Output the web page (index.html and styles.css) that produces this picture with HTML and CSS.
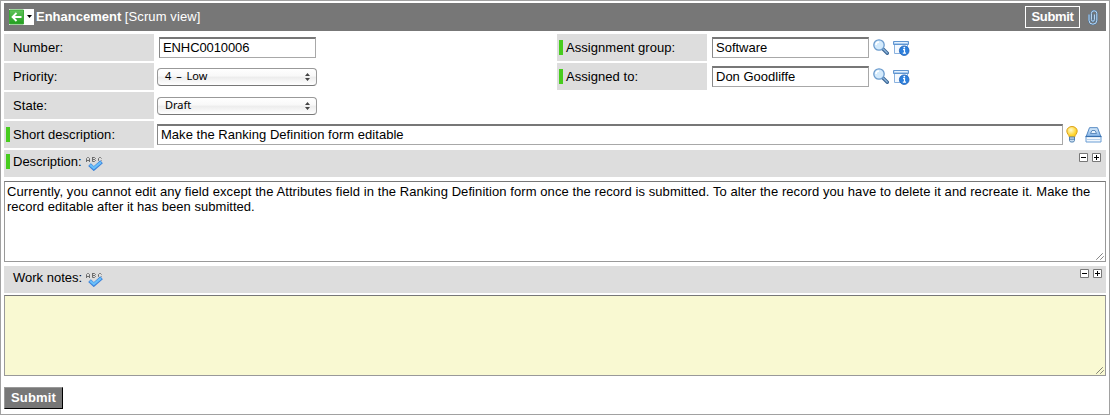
FILE: index.html
```html
<!DOCTYPE html>
<html lang="en">
<head>
<meta charset="utf-8">
<title>Enhancement</title>
<link rel="stylesheet" href="styles.css">
</head>
<body>
<svg class="defs" aria-hidden="true">
  <defs>
    <linearGradient id="green" x2="0" y2="1"><stop stop-color="#62c45c"/><stop offset="1" stop-color="#1f9d1d"/></linearGradient>
    <linearGradient id="blue" x2="0" y2="1"><stop stop-color="#dceefc"/><stop offset="1" stop-color="#7fb0e6"/></linearGradient>
    <radialGradient id="glow" cx=".4" cy=".35"><stop stop-color="#fffbd0"/><stop offset="1" stop-color="#ffd42c"/></radialGradient>
  </defs>
  <symbol id="search" viewBox="0 0 16 16">
    <path d="M10 10l4.3 4.3" stroke="#3b6695" stroke-width="3.4" stroke-linecap="round"/>
    <path d="M10.5 10.3l3.7 3.7" stroke="#8fb6dc" stroke-width="1.3" stroke-linecap="round"/>
    <circle cx="6" cy="6" r="5.2" fill="#d3eafc" stroke="#6b9bcd" stroke-width="1.3"/>
    <path d="M3 6a3 3 0 0 1 3-3" fill="none" stroke="#fff" stroke-width="1.5"/>
  </symbol>
  <symbol id="info" viewBox="0 0 17 16">
    <path d="M1.500 4.500h13v9h-13z" fill="#f4f9fe" stroke="#8bb2df"/>
    <path d="M.5 1.500h15v3H.5z" fill="#a7caef" stroke="#6095d0"/>
    <path d="M1.500 2.500h13" stroke="#e4f1fd"/>
    <circle cx="11.2" cy="10.7" r="4.8" fill="#2c7fdc" stroke="#1d5fb5" stroke-width=".8"/>
    <path d="M10 9.700h1.500v3.500M9.800 13.200h3.200" fill="none" stroke="#fff" stroke-width="1.2"/>
    <circle cx="11.3" cy="7.700" r=".9" fill="#fff"/>
  </symbol>
  <symbol id="spell" viewBox="0 0 17 15">
    <path d="M.5 6V2.500l1-1h1l1 1V6M.5 4.500h3M6.500 1v4.500h2l1-1-1-1h-2 2l1-1-1-1h-2M15.500 2.500l-1-1h-1l-1 1v2l1 1h1l1-1" fill="none" stroke="#6c6c6c"/>
    <path d="M3.500 8.600l4.300 4L15.600 5.800" fill="none" stroke="#3d83da" stroke-width="3.8"/>
    <path d="M4.100 8.800l3.700 3.200L15 6.200" fill="none" stroke="#6ac0fa" stroke-width="2.200"/>
  </symbol>
</svg>

<main class="form">
  <header class="bar">
    <span class="back">
      <svg width="25" height="16" viewBox="0 0 25 16">
        <path d="M0 0h25v16H0z" fill="#fff"/>
        <path d="M.5 1h14v14H.5z" fill="url(#green)" stroke="#3dab39"/>
        <path d="M12.500 8H4M7.500 4L3.500 8l4 4" fill="none" stroke="#fff" stroke-width="1.800"/>
        <path d="M18 6h5l-2.500 3z" fill="#000"/>
      </svg>
    </span>
    <h1 class="title">Enhancement <span class="view">[Scrum view]</span></h1>
    <button class="top-submit">Submit</button>
    <svg class="clip" width="10" height="15" viewBox="0 0 10 15">
      <path d="M1 4.500v5.800a3.800 3.800 0 0 0 7.800 0V3.500a2.700 2.700 0 0 0-5.400 0v6.200a1.500 1.500 0 0 0 3 0V4.500" fill="none" stroke="#41719f" stroke-width="1.900"/>
      <path d="M1 4.500v5.800a3.800 3.800 0 0 0 7.800 0V3.500a2.700 2.700 0 0 0-5.400 0v6.200a1.500 1.500 0 0 0 3 0V4.500" fill="none" stroke="#c5dff7" stroke-width="1"/>
    </svg>
  </header>

  <section class="columns">
    <div class="column">
      <div class="row"><div class="label">Number:</div><div class="input number">ENHC0010006</div></div>
      <div class="row"><div class="label">Priority:</div><div class="select"><span>4 – Low</span><svg width="5" height="8" viewBox="0 0 5 8"><path d="M0 3l2.500-3L5 3zM0 5l2.500 3L5 5z" fill="#444"/></svg></div></div>
      <div class="row"><div class="label">State:</div><div class="select"><span>Draft</span><svg width="5" height="8" viewBox="0 0 5 8"><path d="M0 3l2.500-3L5 3zM0 5l2.500 3L5 5z" fill="#444"/></svg></div></div>
    </div>
    <div class="column">
      <div class="row"><div class="label mark">Assignment group:</div><div class="input">Software</div><svg class="search" width="16" height="16"><use href="#search"/></svg><svg class="info" width="17" height="16"><use href="#info"/></svg></div>
      <div class="row"><div class="label mark">Assigned to:</div><div class="input">Don Goodliffe</div><svg class="search" width="16" height="16"><use href="#search"/></svg><svg class="info" width="17" height="16"><use href="#info"/></svg></div>
    </div>
  </section>

  <div class="row short">
    <div class="label mark">Short description:</div>
    <div class="input wide">Make the Ranking Definition form editable</div>
    <svg class="bulb" width="12" height="17" viewBox="0 0 12 17">
      <path d="M3.300 11C3.300 9 .8 8 .8 5a5.200 4.500 0 0 1 10.400 0c0 3-2.500 4-2.500 6z" fill="url(#glow)" stroke="#dba21c"/>
      <path d="M3.500 11h5v3.500l-1 1.500h-3l-1-1.500z" fill="#c9ddf0" stroke="#4678aa" stroke-width=".9"/>
      <path d="M3.500 13.200h5" stroke="#4678aa" stroke-width=".9"/>
    </svg>
    <svg class="book" width="17" height="16" viewBox="0 0 17 16">
      <path d="M4.500.7h8l3.300 8.800H1.200z" fill="url(#blue)" stroke="#5287c2"/>
      <path d="M1 9.500h15v5.500H1z" fill="#f4f9fe" stroke="#6b9dd4"/>
      <path d="M.5 9.500h16" stroke="#376fae" stroke-width="1.200"/>
      <path d="M2 12.500h13" stroke="#b7d0ea"/>
      <path d="M5.500 6.500l1.500-3h3l1.500 3z" fill="#e9f4fe" stroke="#4678b1" stroke-width=".8"/>
    </svg>
  </div>

  <div class="section mark">
    <span>Description:</span><svg class="spell" width="17" height="15"><use href="#spell"/></svg>
    <span class="tools"><svg width="9" height="9" viewBox="0 0 9 9"><path d="M.5.5h8v8h-8z" fill="#fff" stroke="#777"/><path d="M2 4.500h5" stroke="#000"/></svg><svg width="9" height="9" viewBox="0 0 9 9"><path d="M.5.5h8v8h-8z" fill="#fff" stroke="#777"/><path d="M2 4.500h5M4.500 2v5" stroke="#000"/></svg></span>
  </div>
  <div class="area description"><p class="line first">Currently, you cannot edit any field except the Attributes field in the Ranking Definition form once the record is submitted. To alter the record you have to delete it and recreate it. Make the</p><p class="line">record editable after it has been submitted.</p>
    <svg class="grip" width="8" height="7" viewBox="0 0 8 7"><path d="M.5 6.500l6-6M4.500 6.500l3-3" stroke="#444" stroke-dasharray="1.200 .3"/></svg>
  </div>

  <div class="section notes">
    <span>Work notes:</span><svg class="spell" width="17" height="15"><use href="#spell"/></svg>
    <span class="tools"><svg width="9" height="9" viewBox="0 0 9 9"><path d="M.5.5h8v8h-8z" fill="#fff" stroke="#777"/><path d="M2 4.500h5" stroke="#000"/></svg><svg width="9" height="9" viewBox="0 0 9 9"><path d="M.5.5h8v8h-8z" fill="#fff" stroke="#777"/><path d="M2 4.500h5M4.500 2v5" stroke="#000"/></svg></span>
  </div>
  <div class="area yellow">
    <svg class="grip" width="8" height="7" viewBox="0 0 8 7"><path d="M.5 6.500l6-6M4.500 6.500l3-3" stroke="#444" stroke-dasharray="1.200 .3"/></svg>
  </div>
  <button class="bottom-submit">Submit</button>
</main>
</body>
</html>
```
FILE: styles.css
```css
* { box-sizing: border-box; }
body { margin: 0; background: #fff; color: #000; font: 13px/15px "Liberation Sans", Arial, sans-serif; }
svg { display: block; flex: none; }
.defs { position: absolute; width: 0; height: 0; }
.form { display: flex; flex-direction: column; width: 1110px; height: 415px; padding: 2px 3px 0; border: 1px solid #a1a1a1; }
.bar { display: flex; align-items: center; height: 28px; padding: 0 8px 0 5px; background: #777; color: #fff; }
.title { flex: 1; margin: -2px 0 0 2px; font-size: 13px; font-weight: bold; line-height: 15px; }
.view { font-weight: normal; letter-spacing: .1px; }
button { margin: 0; padding: 0 0 1px; background: #777; color: #fff; font: bold 13px/15px "Liberation Sans", Arial, sans-serif; }
.top-submit { width: 55px; height: 22px; margin-right: 8px; border: 1px solid #fff; letter-spacing: -.35px; }
.columns { display: grid; grid-template-columns: 553px 1fr; margin-top: 3px; }
.column { display: flex; flex-direction: column; gap: 2px; }
.row { display: flex; align-items: center; height: 27px; }
.label { display: flex; align-items: center; width: 150px; height: 27px; padding-left: 9px; background: #ddd; letter-spacing: .05px; }
.mark::before { content: ""; width: 4px; height: 15px; margin: 0 3px 0 -7px; background: #47cc1e; }
.input { width: 157px; height: 21px; margin-left: 5px; padding: 1px 3px; border: 1px solid #a8a8a8; border-top: 2px solid #777; border-left-color: #888; background: #fff; white-space: nowrap; }
.number { letter-spacing: -.1px; }
.select { display: flex; align-items: center; justify-content: space-between; width: 160px; height: 18px; margin-left: 3px; padding: 0 6px 2px 7px; border: 1px solid #999; border-bottom-color: #777; border-radius: 4px; background: linear-gradient(#fff, #f8f8f8 45%, #ececec 50%, #fff); font: 11px/13px "Noto Sans", sans-serif; word-spacing: 2px; }
.select svg { margin-top: 2px; }
.search { margin: -2px 0 0 4px; }
.info { margin-left: 4px; }
.short { margin-top: 2px; }
.wide { width: 906px; margin-left: 3px; letter-spacing: .03px; }
.bulb { margin-left: 3px; }
.book { margin-left: 7px; }
.section { display: flex; align-items: center; height: 27px; margin-top: 2px; padding: 0 5px 4px 9px; background: #ddd; }
.spell { margin: 3px 0 0 4px; }
.tools { display: flex; gap: 4px; margin: -9px 0 0 auto; }
.area { position: relative; height: 81px; border: 1px solid #999; border-top-color: #777; background: #fff; }
.description { margin-top: 4px; padding: 2px; }
.line { margin: 0; white-space: nowrap; letter-spacing: .03px; }
.first { letter-spacing: .078px; }
.grip { position: absolute; right: 1px; bottom: 1px; }
.notes { margin-top: 4px; padding-right: 4px; }
.yellow { margin-top: 2px; background: #f9f9d2; }
.bottom-submit { width: 59px; height: 22px; margin-top: 11px; padding-bottom: 2px; border: 1px solid #999; border-right-color: #000; border-bottom-color: #000; letter-spacing: .15px; }
```
